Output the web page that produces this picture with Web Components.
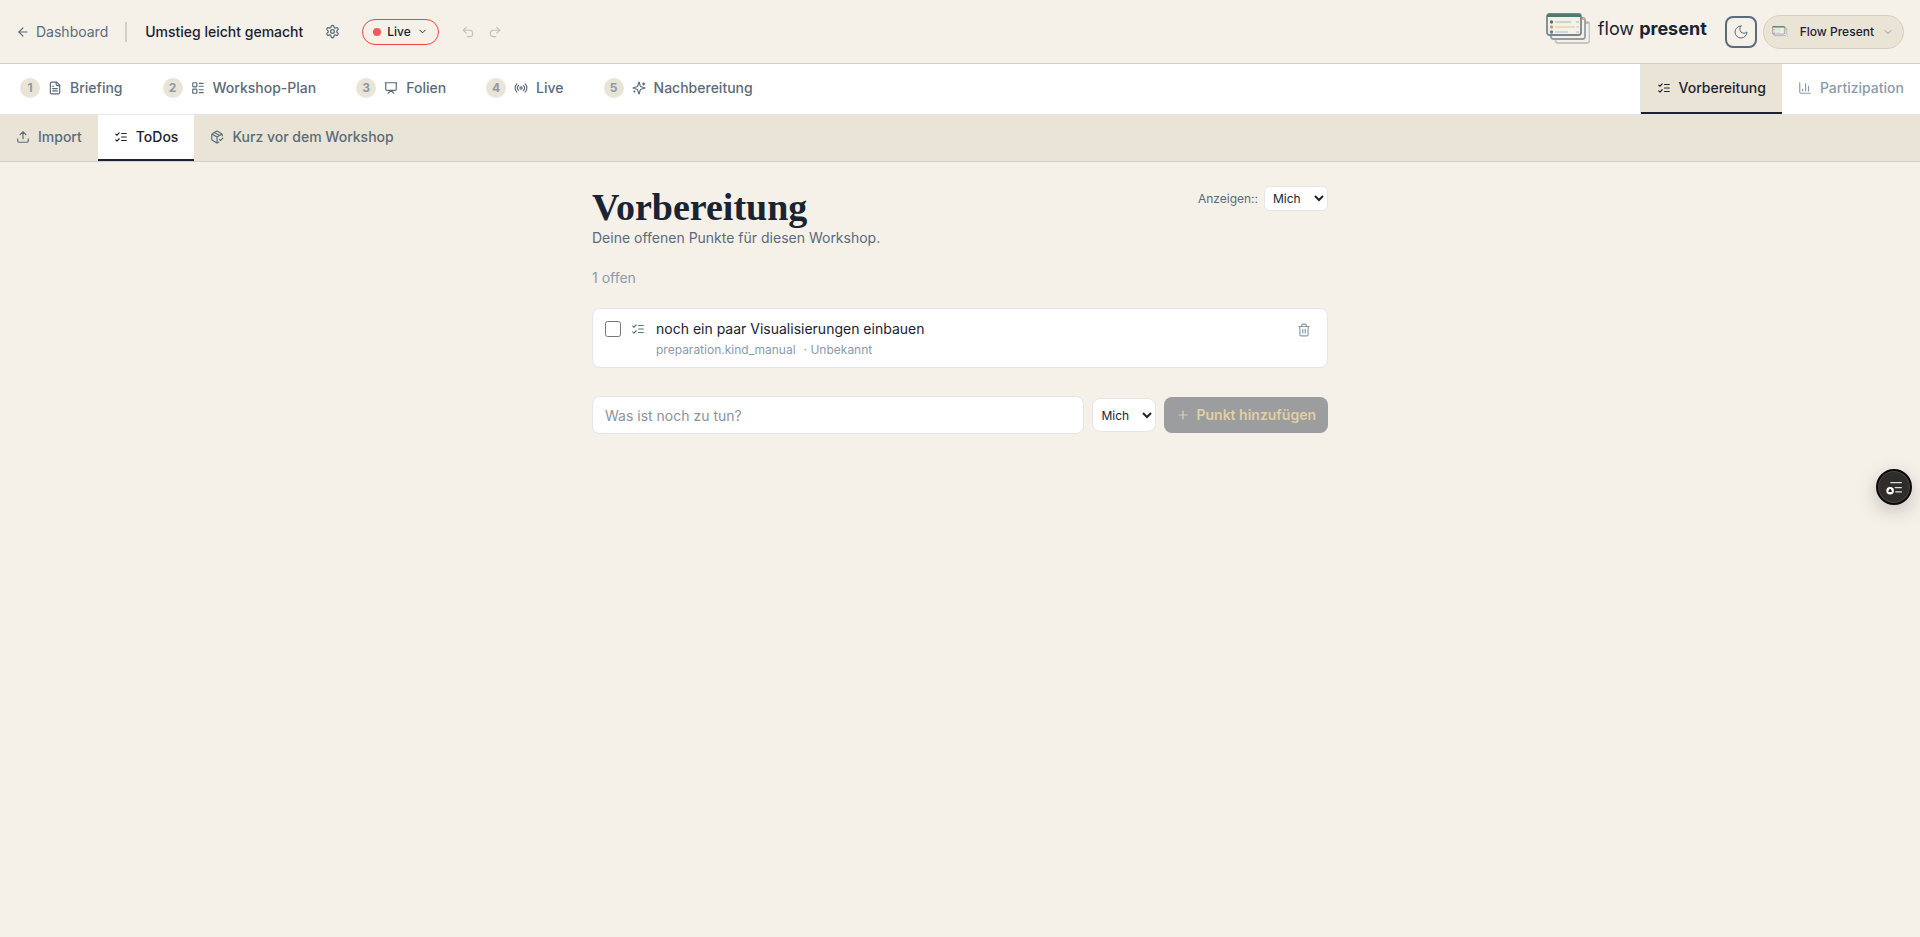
<!DOCTYPE html>
<html lang="de">
<head>
<meta charset="utf-8">
<title>Flow Present</title>
<style>
    :root {
        --paper: #f5f0e8;
        --sand: #eae4d6;
        --ink: #1a2332;
        --slate: #5a6b7b;
        --mist: #8b9bab;
        --line: #e2e5e9;
        --line-warm: #d4cfc4;
        --green: #4a7c6f;
    }
    body {
        margin: 0;
        min-height: 100vh;
        background: var(--paper);
        color: var(--ink);
        font-family: Inter, "Liberation Sans", sans-serif;
        font-size: 14px;
        line-height: 20px;
    }
</style>
</head>
<body>
<flow-app></flow-app>

<script>
const icons = {
    back: '<path d="m12 19-7-7 7-7"/><path d="M19 12H5"/>',
    down: '<path d="m6 9 6 6 6-6"/>',
    undo: '<path d="M9 14 4 9l5-5"/><path d="M4 9h10.500a5.500 5.500 0 0 1 0 11H11"/>',
    redo: '<path d="m15 14 5-5-5-5"/><path d="M20 9H9.500a5.500 5.500 0 0 0 0 11H13"/>',
    gear: '<path d="M12.220 2h-.440a2 2 0 0 0-2 2v.180a2 2 0 0 1-1 1.730l-.430.250a2 2 0 0 1-2 0l-.150-.080a2 2 0 0 0-2.730.730l-.220.380a2 2 0 0 0 .730 2.730l.150.100a2 2 0 0 1 1 1.720v.510a2 2 0 0 1-1 1.740l-.150.090a2 2 0 0 0-.730 2.730l.220.380a2 2 0 0 0 2.730.730l.150-.080a2 2 0 0 1 2 0l.430.250a2 2 0 0 1 1 1.730V20a2 2 0 0 0 2 2h.440a2 2 0 0 0 2-2v-.180a2 2 0 0 1 1-1.730l.430-.250a2 2 0 0 1 2 0l.150.080a2 2 0 0 0 2.730-.730l.220-.390a2 2 0 0 0-.730-2.730l-.150-.080a2 2 0 0 1-1-1.740v-.500a2 2 0 0 1 1-1.740l.150-.090a2 2 0 0 0 .730-2.730l-.220-.380a2 2 0 0 0-2.730-.730l-.150.080a2 2 0 0 1-2 0l-.430-.250a2 2 0 0 1-1-1.730V4a2 2 0 0 0-2-2z"/><circle cx="12" cy="12" r="3"/>',
    file: '<path d="M15 2H6a2 2 0 0 0-2 2v16a2 2 0 0 0 2 2h12a2 2 0 0 0 2-2V7Z"/><path d="M14 2v4a2 2 0 0 0 2 2h4M10 9H8M16 13H8M16 17H8"/>',
    plan: '<rect width="7" height="7" x="3" y="3" rx="1"/><rect width="7" height="7" x="3" y="14" rx="1"/><path d="M14 4h7M14 9h7M14 15h7M14 20h7"/>',
    slides: '<path d="M2 3h20M21 3v11a2 2 0 0 1-2 2H5a2 2 0 0 1-2-2V3m4 18 5-5 5 5"/>',
    radio: '<path d="M4.900 19.100C1 15.200 1 8.800 4.900 4.900M7.800 16.200c-2.300-2.300-2.300-6.100 0-8.500M16.200 7.800c2.300 2.300 2.300 6.100 0 8.500M19.100 4.900C23 8.800 23 15.100 19.100 19"/><circle cx="12" cy="12" r="2"/>',
    sparkles: '<path d="M9.937 15.500A2 2 0 0 0 8.500 14.063l-6.135-1.582a.5.5 0 0 1 0-.962L8.500 9.936A2 2 0 0 0 9.937 8.500l1.582-6.135a.5.5 0 0 1 .963 0L14.063 8.500A2 2 0 0 0 15.500 9.937l6.135 1.581a.5.5 0 0 1 0 .964L15.500 14.063a2 2 0 0 0-1.437 1.437l-1.582 6.135a.5.5 0 0 1-.963 0z"/><path d="M20 3v4M22 5h-4M4 17v2M5 18H3"/>',
    todo: '<path d="m3 17 2 2 4-4M3 7l2 2 4-4M13 6h8M13 12h8M13 18h8"/>',
    chart: '<path d="M3 3v16a2 2 0 0 0 2 2h16M18 17V9M13 17V5M8 17v-3"/>',
    upload: '<path d="M21 15v4a2 2 0 0 1-2 2H5a2 2 0 0 1-2-2v-4M17 8l-5-5-5 5M12 3v12"/>',
    box: '<path d="m16 16 2 2 4-4"/><path d="M21 10V8a2 2 0 0 0-1-1.730l-7-4a2 2 0 0 0-2 0l-7 4A2 2 0 0 0 3 8v8a2 2 0 0 0 1 1.730l7 4a2 2 0 0 0 2 0l2-1.140M7.500 4.270l9 5.150M3.290 7 12 12l8.710-5M12 22V12"/>',
    moon: '<path d="M12 3a6 6 0 0 0 9 9 9 9 0 1 1-9-9Z"/>',
    plus: '<path d="M5 12h14M12 5v14"/>',
    trash: '<path d="M3 6h18M19 6v14a2 2 0 0 1-2 2H7a2 2 0 0 1-2-2V6M8 6V4a2 2 0 0 1 2-2h4a2 2 0 0 1 2 2v2M10 11v6M14 11v6"/>',
    assist: '<path d="M6 4h17M13 12h10M14 19h9"/><circle cx="5" cy="17" r="5" fill="#fff" stroke="#fff"/><path d="M3 18h4l-2-3z" fill="#2b2a28" stroke="#2b2a28"/>'
};

class FlowIcon extends HTMLElement {
    constructor() {
        super();
        this.attachShadow({ mode: 'open' });
    }

    connectedCallback() {
        const size = this.getAttribute('size') || 14;
        this.shadowRoot.innerHTML = `
            <style>
                :host { display: inline-flex; flex: none; }
                svg { overflow: visible; fill: none; stroke: currentColor; stroke-width: 2; stroke-linecap: round; stroke-linejoin: round; }
                :host([thin]) svg { stroke-width: 1.5; }
            </style>
            <svg width="${size}" height="${size}" viewBox="0 0 24 24" aria-hidden="true">${icons[this.getAttribute('name')]}</svg>
        `;
    }
}
customElements.define('flow-icon', FlowIcon);

// Stack of three slides, the front one with coloured agenda lines
class FlowLogo extends HTMLElement {
    constructor() {
        super();
        this.attachShadow({ mode: 'open' }).innerHTML = `
            <style>
                :host { display: block; flex: none; width: 44px; }
                svg { display: block; width: 100%; }
            </style>
            <svg viewBox="0 0 44 31" fill="none" aria-hidden="true">
                <rect x="9.500" y="9" width="34" height="21" rx="2.500" fill="#f5f0e8" stroke="#c7c5c0" stroke-width="1.800"/>
                <path d="M39 9h3.500v2H39z" fill="#dfaaa0"/>
                <rect x="5" y="5" width="34" height="21" rx="2.500" fill="#f5f0e8" stroke="#989da2" stroke-width="1.800"/>
                <path d="M35 5h3.500v2H35z" fill="#d8b36b"/>
                <rect x="1" y="1" width="34" height="21" rx="2.500" fill="#f5f0e8" stroke="#7b858e" stroke-width="1.800"/>
                <path d="M1 3a2 2 0 0 1 2-2h30a2 2 0 0 1 2 2v1H1z" fill="#4a7c6f"/>
                <circle cx="5.500" cy="9" r="1.700" fill="#4a7c6f"/>
                <circle cx="5.500" cy="14" r="1.700" fill="#d1a154"/>
                <circle cx="5.500" cy="19" r="1.700" fill="#5484bd"/>
                <path d="M9 9h16M30 9h3" stroke="#ccd5cb" stroke-width="2"/>
                <path d="M9 14h20M30 14h3" stroke="#eadcc0" stroke-width="2"/>
                <path d="M9 19h13M30 19h3" stroke="#ced4d7" stroke-width="2"/>
            </svg>
        `;
    }
}
customElements.define('flow-logo', FlowLogo);

class AppHeader extends HTMLElement {
    constructor() {
        super();
        this.attachShadow({ mode: 'open' }).innerHTML = `
            <style>
                :host { display: block; border-bottom: 1px solid var(--line-warm); }
                header, .group, .brand, button, a { display: flex; align-items: center; }
                header { height: 63px; padding: 0 16px; justify-content: space-between; }
                button { font: inherit; color: var(--slate); background: none; border: 0; padding: 0; }
                a { gap: 6px; color: var(--slate); text-decoration: none; }
                .line { width: 2px; height: 20px; margin: 0 18px 0 17px; background: var(--line-warm); }
                .title { font-weight: 500; }
                .gear { margin: 0 22px; }
                .live { gap: 6px; height: 26px; padding: 0 10px; border: 1px solid #ef4444; border-radius: 13px; color: var(--ink); font-size: 12px; font-weight: 500; }
                .live i { width: 8px; height: 8px; border-radius: 50%; background: #f05a5a; }
                .history { gap: 13px; margin-left: 22px; }
                .history button { opacity: .35; }
                .brand { gap: 8px; padding-bottom: 6px; margin-right: 18px; font-size: 18px; }
                .moon { width: 32px; height: 32px; justify-content: center; border: 2px solid var(--slate); border-radius: 8px; margin-right: 6px; }
                .user { gap: 8px; height: 34px; padding: 0 9px 0 8px; border: 1px solid var(--line-warm); border-radius: 17px; background: var(--sand); color: var(--ink); font-size: 12px; font-weight: 500; }
                .user flow-logo { width: 16px; margin-right: 4px; }
                .user flow-icon { color: var(--mist); }
            </style>
            <header>
                <div class="group">
                    <a href="#"><flow-icon name="back"></flow-icon>Dashboard</a>
                    <span class="line"></span>
                    <span class="title"><slot name="title"></slot></span>
                    <button class="gear" aria-label="Einstellungen"><flow-icon name="gear" size="15"></flow-icon></button>
                    <button class="live"><i></i>Live<flow-icon name="down" size="11"></flow-icon></button>
                    <div class="group history">
                        <button aria-label="Rückgängig" disabled><flow-icon name="undo"></flow-icon></button>
                        <button aria-label="Wiederholen" disabled><flow-icon name="redo"></flow-icon></button>
                    </div>
                </div>
                <div class="group">
                    <div class="brand"><flow-logo></flow-logo><span>flow <b>present</b></span></div>
                    <button class="moon" aria-label="Dunkles Design"><flow-icon name="moon" size="16" thin></flow-icon></button>
                    <button class="user"><flow-logo></flow-logo><slot name="user"></slot><flow-icon name="down" size="12"></flow-icon></button>
                </div>
            </header>
        `;
    }
}
customElements.define('app-header', AppHeader);

class StepLink extends HTMLElement {
    constructor() {
        super();
        this.attachShadow({ mode: 'open' });
    }

    connectedCallback() {
        this.shadowRoot.innerHTML = `
            <style>
                :host { display: flex; }
                a { display: flex; align-items: center; gap: 8px; padding: 0 20px 2px; color: var(--slate); font-weight: 500; text-decoration: none; }
                .number { width: 20px; border-radius: 10px; background: var(--sand); color: var(--mist); font-size: 12px; font-weight: 700; text-align: center; }
            </style>
            <a href="#"><span class="number">${this.getAttribute('number')}</span><flow-icon name="${this.getAttribute('icon')}"></flow-icon><slot></slot></a>
        `;
    }
}
customElements.define('step-link', StepLink);

class TabLink extends HTMLElement {
    constructor() {
        super();
        this.attachShadow({ mode: 'open' });
    }

    connectedCallback() {
        this.shadowRoot.innerHTML = `
            <style>
                :host { display: flex; color: var(--slate); }
                :host([muted]) { color: var(--mist); }
                :host([active]) { color: var(--ink); background: var(--active, #fff); }
                a { display: flex; align-items: center; gap: 8px; padding: 0 16px; border-bottom: 2px solid transparent; color: inherit; font-weight: 500; text-decoration: none; }
                :host([active]) a { border-bottom-color: var(--ink); }
            </style>
            <a href="#"><flow-icon name="${this.getAttribute('icon')}"></flow-icon><slot></slot></a>
        `;
    }
}
customElements.define('tab-link', TabLink);

class StepNav extends HTMLElement {
    constructor() {
        super();
        this.attachShadow({ mode: 'open' }).innerHTML = `
            <style>
                :host { display: block; background: #fff; border-bottom: 1px solid var(--line); }
                nav { display: flex; justify-content: space-between; height: 50px; }
                div { display: flex; }
                .views { border-left: 1px solid var(--line); --active: var(--sand); }
            </style>
            <nav>
                <div><slot></slot></div>
                <div class="views"><slot name="view"></slot></div>
            </nav>
        `;
    }
}
customElements.define('step-nav', StepNav);

class SubNav extends HTMLElement {
    constructor() {
        super();
        this.attachShadow({ mode: 'open' }).innerHTML = `
            <style>
                :host { display: block; background: var(--sand); border-bottom: 1px solid var(--line-warm); }
                nav { display: flex; height: 46px; }
            </style>
            <nav><slot></slot></nav>
        `;
    }
}
customElements.define('sub-nav', SubNav);

class TodoItem extends HTMLElement {
    constructor() {
        super();
        this.attachShadow({ mode: 'open' }).innerHTML = `
            <style>
                :host { display: block; background: #fff; border: 1px solid var(--line); border-radius: 8px; }
                .row { display: flex; align-items: flex-start; padding: 10px 16px 7px 12px; }
                input { width: 16px; height: 16px; margin: 2px 10px 2px 0; }
                .kind { padding: 3px 0; margin-right: 11px; color: var(--green); }
                .text { flex: 1; }
                label { display: block; }
                .meta { display: flex; gap: 8px; margin-top: 1px; color: var(--mist); font-size: 12px; }
                button { display: flex; padding: 4px 0; border: 0; background: none; color: var(--mist); }
            </style>
            <div class="row">
                <input type="checkbox" id="done">
                <flow-icon class="kind" name="todo"></flow-icon>
                <div class="text">
                    <label for="done"><slot></slot></label>
                    <div class="meta"><slot name="kind"></slot><slot name="owner"></slot></div>
                </div>
                <button aria-label="Löschen"><flow-icon name="trash"></flow-icon></button>
            </div>
        `;
    }
}
customElements.define('todo-item', TodoItem);

class TodoPage extends HTMLElement {
    constructor() {
        super();
        this.attachShadow({ mode: 'open' }).innerHTML = `
            <style>
                :host { display: block; max-width: 736px; margin: 0 auto; padding: 24px 16px; }
                .head { display: flex; justify-content: space-between; align-items: flex-start; }
                h1 { margin: 0; font: bold 38px/42px "Liberation Serif", serif; }
                p { margin: 0; color: var(--slate); }
                .filter { display: flex; align-items: center; gap: 6px; color: var(--slate); font-size: 12px; }
                .count { margin: 20px 0; color: var(--mist); }
                form { display: flex; align-items: center; gap: 8px; margin-top: 28px; }
                input, select, button { box-sizing: border-box; font: inherit; color: var(--ink); border: 1px solid var(--line); border-radius: 8px; background: #fff; }
                select { width: 64px; height: 34px; padding: 0 4px; font-size: 12px; }
                .filter select { height: 25px; border-radius: 6px; }
                input { flex: 1; min-width: 0; height: 38px; padding: 0 12px; }
                input::placeholder { color: #8e939b; }
                button { display: flex; align-items: center; gap: 6px; height: 36px; padding: 0 12px; border: 0; background: #9c9d9f; color: #e2cfa4; font-weight: 600; }
            </style>
            <div class="head">
                <div>
                    <h1>Vorbereitung</h1>
                    <p>Deine offenen Punkte für diesen Workshop.</p>
                </div>
                <div class="filter">
                    <label for="show">Anzeigen::</label>
                    <select id="show"><option>Mich</option></select>
                </div>
            </div>
            <p class="count">1 offen</p>
            <slot></slot>
            <form>
                <input type="text" placeholder="Was ist noch zu tun?" aria-label="Was ist noch zu tun?">
                <select aria-label="Zuständig"><option>Mich</option></select>
                <button disabled><flow-icon name="plus"></flow-icon>Punkt hinzufügen</button>
            </form>
        `;
    }
}
customElements.define('todo-page', TodoPage);

class AssistButton extends HTMLElement {
    constructor() {
        super();
        // stays on the right edge while the page scrolls
        this.attachShadow({ mode: 'open' }).innerHTML = `
            <style>
                :host { position: fixed; right: 8px; top: 52%; transform: translateY(-50%); }
                button { display: flex; align-items: center; justify-content: center; width: 36px; height: 36px; padding: 0; border: 2px solid #0a0a0a; border-radius: 50%; background: #2e2d2b; color: #ddd; box-shadow: inset 0 0 0 1px #4a4a4a, 0 6px 20px rgba(0, 0, 0, .2); }
            </style>
            <button aria-label="Assistent"><flow-icon name="assist" size="15"></flow-icon></button>
        `;
    }
}
customElements.define('assist-button', AssistButton);

class FlowApp extends HTMLElement {
    constructor() {
        super();
        this.attachShadow({ mode: 'open' }).innerHTML = `
            <style>
                :host { display: block; }
            </style>
            <app-header>
                <span slot="title">Umstieg leicht gemacht</span>
                <span slot="user">Flow Present</span>
            </app-header>
            <step-nav>
                <step-link number="1" icon="file">Briefing</step-link>
                <step-link number="2" icon="plan">Workshop-Plan</step-link>
                <step-link number="3" icon="slides">Folien</step-link>
                <step-link number="4" icon="radio">Live</step-link>
                <step-link number="5" icon="sparkles">Nachbereitung</step-link>
                <tab-link slot="view" icon="todo" active>Vorbereitung</tab-link>
                <tab-link slot="view" icon="chart" muted>Partizipation</tab-link>
            </step-nav>
            <sub-nav>
                <tab-link icon="upload">Import</tab-link>
                <tab-link icon="todo" active>ToDos</tab-link>
                <tab-link icon="box">Kurz vor dem Workshop</tab-link>
            </sub-nav>
            <todo-page>
                <todo-item>
                    noch ein paar Visualisierungen einbauen
                    <span slot="kind">preparation.kind_manual</span>
                    <span slot="owner">· Unbekannt</span>
                </todo-item>
            </todo-page>
            <assist-button></assist-button>
        `;
    }
}
customElements.define('flow-app', FlowApp);
</script>
</body>
</html>
